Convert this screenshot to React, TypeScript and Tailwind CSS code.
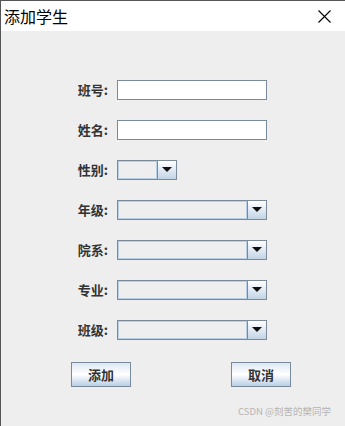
const cjk = { fontFamily: '"Noto Sans CJK SC", "Noto Sans", sans-serif' }

function Label({ text }: { text: string }) {
    return (
        <div className="w-[108px] pr-[1px] text-right text-[13px] font-bold leading-5 text-[#333333]" style={cjk}>
            {text}:
        </div>
    )
}

function TextField() {
    return <div className="ml-2 h-5 w-[150px] border border-[#7a8a99] bg-white" />
}

function Combo({ width }: { width: string }) {
    return (
        <div className={`ml-2 flex h-5 ${width} border border-[#7a8a99] bg-[#eeeeee]`}>
            <div className="flex-1 border border-[#b8cfe5]" />
            <div className="flex w-[19px] items-center justify-center border-l border-[#7a8a99] bg-gradient-to-b from-white to-[#c3d4e6]">
                <svg width="10" height="6" viewBox="0 0 10 6">
                    <polygon points="0,0 10,0 5,5" fill="#111111" />
                </svg>
            </div>
        </div>
    )
}

function Button({ text }: { text: string }) {
    return (
        <div
            className="flex h-[25px] w-[60px] items-center justify-center border border-[#7a8a99] bg-gradient-to-b from-[#dde8f3] via-white to-[#b8cfe5] text-[13px] font-bold text-[#333333]"
            style={cjk}
        >
            {text}
        </div>
    )
}

export default function App() {
    const rows: { label: string; kind: "text" | "small" | "combo" }[] = [
        { label: "班号", kind: "text" },
        { label: "姓名", kind: "text" },
        { label: "性别", kind: "small" },
        { label: "年级", kind: "combo" },
        { label: "院系", kind: "combo" },
        { label: "专业", kind: "combo" },
        { label: "班级", kind: "combo" },
    ]

    return (
        <div className="flex h-[426px] w-[345px] flex-col border-l border-t border-[#555555] bg-[#eeeeee]">
            <div className="flex h-[30px] items-center justify-between bg-white pl-[3px] pr-[14px]">
                <span className="text-[16px] text-black" style={cjk}>添加学生</span>
                <svg width="13" height="13" viewBox="0 0 13 13">
                    <path d="M0.5 0.5 L12.5 12.5 M12.5 0.5 L0.5 12.5" stroke="#000" strokeWidth="1.1" />
                </svg>
            </div>
            <div className="flex flex-col gap-5 pt-[49px]">
                {rows.map((r) => (
                    <div key={r.label} className="flex items-center">
                        <Label text={r.label} />
                        {r.kind === "text" && <TextField />}
                        {r.kind === "small" && <Combo width="w-[60px]" />}
                        {r.kind === "combo" && <Combo width="w-[150px]" />}
                    </div>
                ))}
            </div>
            <div className="mt-[22px] flex gap-[100px] pl-[70px]">
                <Button text="添加" />
                <Button text="取消" />
            </div>
            <div className="mt-[17px] pr-[14px] text-right text-[9.5px] text-[#b4b4b4]" style={cjk}>
                CSDN @刻苦的樊同学
            </div>
        </div>
    )
}
